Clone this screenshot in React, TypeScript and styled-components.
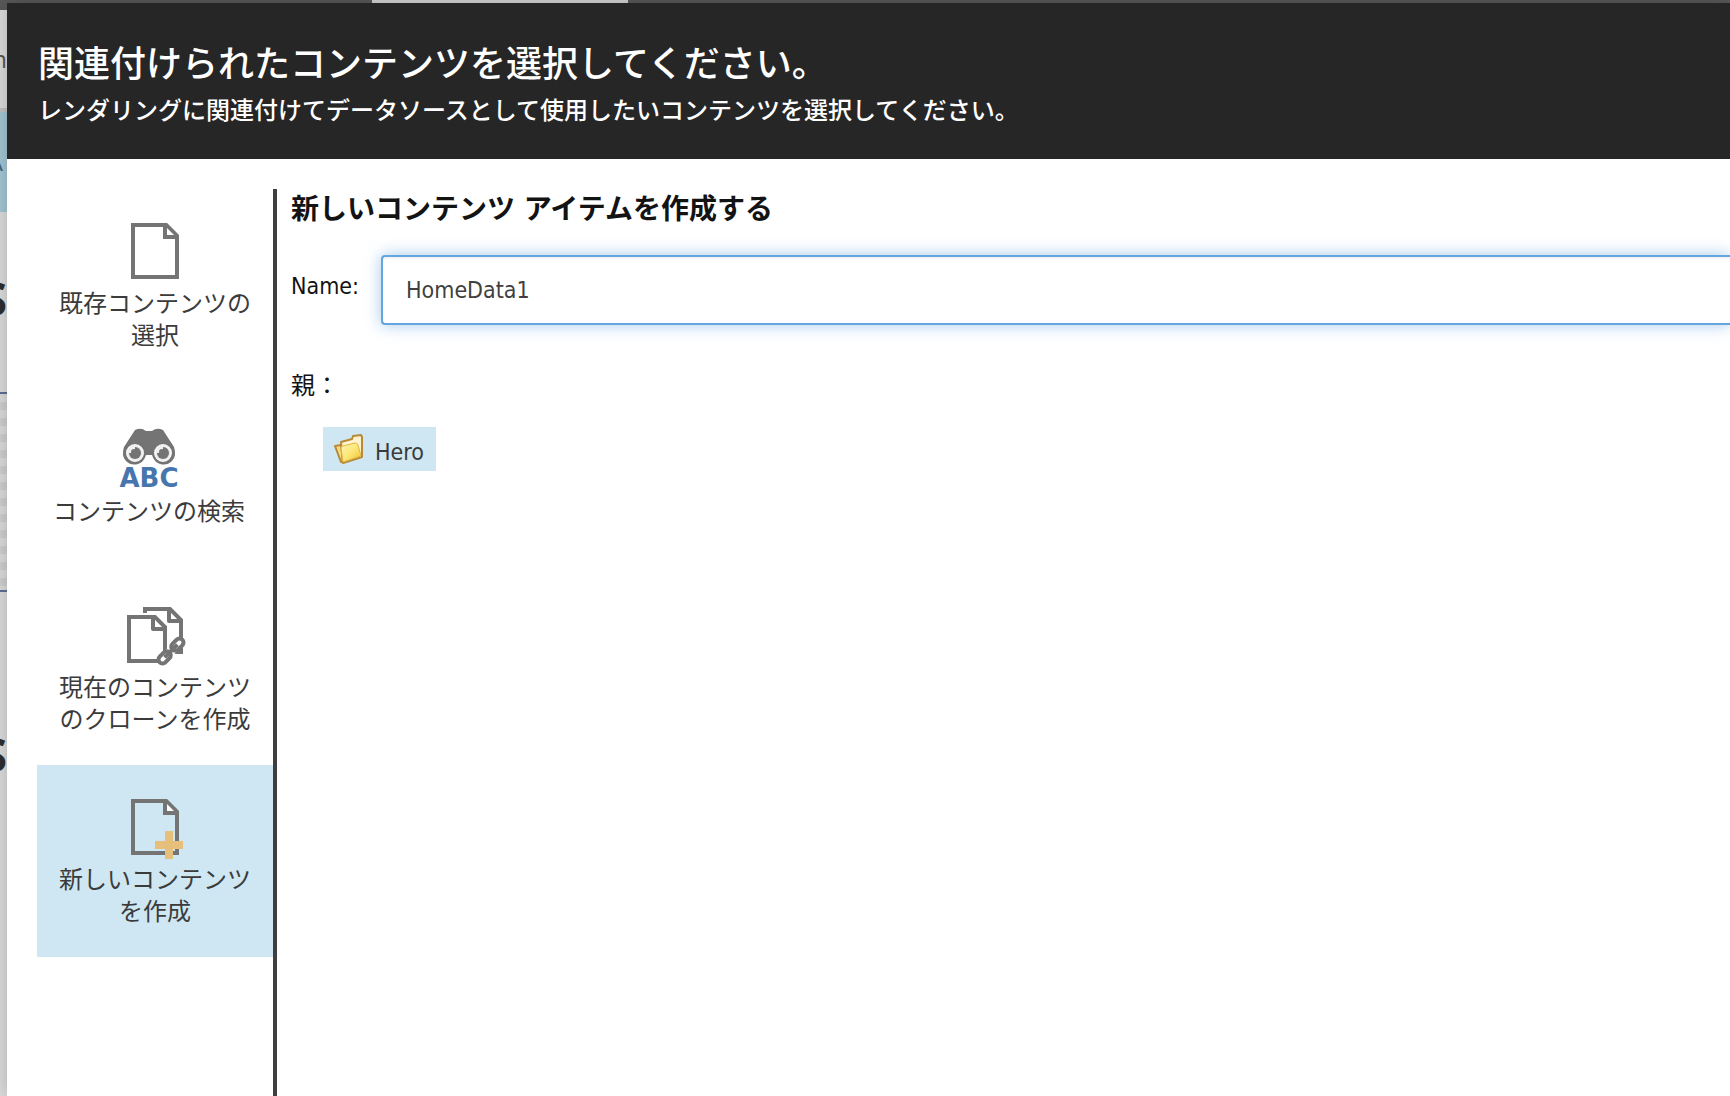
import React, { useState } from 'react';
import styled, { createGlobalStyle } from 'styled-components';

const GlobalStyle = createGlobalStyle`
  *, *::before, *::after { box-sizing: border-box; }
  html, body, #root { height: 100%; }
  body {
    margin: 0;
    overflow: hidden;
    font-family: "DejaVu Sans Condensed", "Noto Sans CJK JP", sans-serif;
    color: #131313;
  }
`;

const Page = styled.div`
  display: grid;
  grid-template: 3px minmax(0, 1fr) / 7px minmax(0, 1fr);
  min-height: 100vh;
  background: #dadada;
`;

const TabStrip = styled.div`
  grid-column: 1 / -1;
  display: flex;
  padding-left: 372px;
  background: #585858;
`;

const ActiveTab = styled.div`
  width: 256px;
  background: #d2d2d2;
`;

const PageEdge = styled.div`
  display: flex;
  flex-direction: column;
  overflow: hidden;
`;

const EdgeBlock = styled.div<{ $h: number; $bg?: string }>`
  flex: none;
  display: flex;
  align-items: center;
  justify-content: flex-end;
  height: ${(p) => p.$h}px;
  background: ${(p) => p.$bg ?? 'transparent'};
`;

const Checker = styled(EdgeBlock)`
  border: solid #5c6d95;
  border-width: 2px 0;
  background: repeating-linear-gradient(#dadada 0 8px, #cecece 8px 16px);
`;

const EdgeText = styled.span<{ $size: number; $bold?: boolean; $pad?: number; $color?: string }>`
  font-family: "Open Sans", sans-serif;
  font-size: ${(p) => p.$size}px;
  font-weight: ${(p) => (p.$bold ? 700 : 400)};
  line-height: 1;
  padding-right: ${(p) => p.$pad ?? 0}px;
  color: ${(p) => p.$color ?? '#2e2e2e'};
`;

const Dialog = styled.main`
  position: relative;
  display: flex;
  flex-direction: column;
  background: #fff;
  box-shadow: 0 0 16px rgba(0, 0, 0, 0.2);
`;

const Header = styled.header`
  padding: 38px 31px 32px;
  background: #262626;
  color: #fff;
`;

const Title = styled.h1`
  margin: 0 0 6px;
  font-size: 36px;
  font-weight: 500;
  line-height: 48px;
`;

const Subtitle = styled.p`
  margin: 0;
  font-size: 24px;
  font-weight: 500;
  line-height: 32px;
`;

const Body = styled.div`
  flex: 1;
  display: flex;
  padding: 30px 0 0 30px;
`;

const Sidebar = styled.nav`
  flex: none;
  width: 240px;
  border-right: 4px solid #3f3f3f;
`;

const NavItem = styled.button<{ $active: boolean; $shift?: boolean }>`
  display: flex;
  flex-direction: column;
  align-items: center;
  justify-content: center;
  gap: 5px;
  width: 100%;
  height: 192px;
  padding: 1px ${(p) => (p.$shift ? 28 : 16)}px 0 16px;
  border: 0;
  background: ${(p) => (p.$active ? '#cee7f2' : 'transparent')};
  color: #3b3b3b;
  font: inherit;
  font-size: 24px;
  line-height: 32px;
  cursor: pointer;

  svg { width: 64px; height: 64px; flex: none; }
`;

const NavLabel = styled.span`
  white-space: pre-line;
`;

const Panel = styled.section`
  flex: 1;
  min-width: 0;
  padding-left: 14px;
`;

const PanelTitle = styled.h2`
  margin: 0;
  padding: 1px 0 25px;
  font-size: 28px;
  font-weight: 700;
  line-height: 40px;
`;

const Field = styled.div`
  display: flex;
`;

const FieldLabel = styled.label`
  width: 90px;
  padding-top: 15px;
  font-size: 23px;
  line-height: 32px;
`;

const NameInput = styled.input`
  flex: 1;
  min-width: 0;
  height: 70px;
  padding: 0 23px;
  border: 2px solid #66a6e0;
  border-right: 0;
  border-radius: 4px 0 0 4px;
  outline: 0;
  box-shadow: 0 0 16px rgba(102, 166, 224, 0.6), inset 0 2px 2px rgba(0, 0, 0, 0.05);
  background: #fff;
  color: #3f3f3f;
  font-family: inherit;
  font-size: 23px;
`;

const ParentLabel = styled.p`
  margin: 45px 0 25px;
  font-size: 24px;
  line-height: 32px;
`;

const TreeNode = styled.button`
  display: flex;
  align-items: center;
  gap: 11px;
  height: 44px;
  margin-left: 32px;
  padding: 0 12px 0 11px;
  border: 0;
  background: #cee7f2;
  color: #3b3b3b;
  font: inherit;
  font-size: 23px;
  line-height: 32px;
  cursor: pointer;

  svg { width: 30px; height: 30px; flex: none; }
  span { padding-top: 6px; }
`;

const GREY = '#747474';

const PageOutline = () => (
  <g fill="none" stroke={GREY} strokeWidth="4">
    <path d="M10 6H43L54 17V58H10Z" />
    <path d="M34 6H43L54 17V24" strokeLinejoin="round" />
    <path d="M42 6V18H54" />
    <path d="M44 9L51 16H44Z" fill="#fff" stroke="none" />
  </g>
);

const PageIcon = () => (
  <svg viewBox="0 0 64 64" aria-hidden="true">
    <PageOutline />
  </svg>
);

const NewPageIcon = () => (
  <svg viewBox="0 0 64 64" aria-hidden="true">
    <PageOutline />
    <path d="M42 36H50V46H60V54H50V64H42V54H32V46H42Z" fill="#e6bf7b" />
  </svg>
);

const SearchIcon = () => (
  <svg viewBox="0 0 64 64" aria-hidden="true">
    <path
      d="M18 3Q24 0 29 4H35Q40 0 46 3L57 20Q60 29 55 34Q50 39 43 37Q37 35 35 28H29Q27 35 21 37Q14 39 9 34Q4 29 7 20Z"
      fill={GREY}
    />
    {[18, 46].map((cx) => (
      <g key={cx}>
        <circle cx={cx} cy="26" r="8" fill="#e8e8e8" stroke="#f4f4f4" strokeWidth="2" />
        <circle cx={cx} cy="26" r="6" fill={GREY} />
        <path d={`M${cx} 26H${cx - 7}A7 7 0 0 1 ${cx} 19Z`} fill="#f0f0f0" />
        <circle cx={cx - 1} cy="25" r="3" fill={GREY} />
      </g>
    ))}
    <text x="32" y="60" textAnchor="middle" fontFamily="DejaVu Sans" fontWeight="700" fontSize="26" fill="#4676ad">
      ABC
    </text>
  </svg>
);

const CloneIcon = () => (
  <svg viewBox="0 0 64 64" aria-hidden="true">
    <g fill="none" stroke={GREY} strokeWidth="4" strokeLinejoin="round">
      <path d="M22 10V6H47L58 17V49H52" strokeLinejoin="miter" />
      <path d="M46 6V18H58" />
      <path d="M6 14H32L42 24V58H6Z" fill="#fff" strokeLinejoin="miter" />
      <path d="M30 14V26H42" />
    </g>
    <g transform="translate(48 48) rotate(-45)" fill="none">
      <path d="M-5 0H5" stroke="#fff" strokeWidth="9" />
      <g stroke={GREY} strokeWidth="4">
        <rect x="-16" y="-4" width="14" height="8" rx="4" fill="#fff" />
        <rect x="2" y="-4" width="14" height="8" rx="4" fill="#fff" />
        <path d="M-9 0H9" />
      </g>
    </g>
  </svg>
);

const FolderIcon = () => (
  <svg viewBox="0 0 30 30" aria-hidden="true">
    <defs>
      <linearGradient id="folder-front" x1="0" y1="0" x2="1" y2="1">
        <stop offset="0" stopColor="#fff6b0" />
        <stop offset="0.5" stopColor="#fde777" />
        <stop offset="1" stopColor="#efc02f" />
      </linearGradient>
    </defs>
    <path d="M1 12L7 11L9 28L7 28Z" fill="#f7dc86" stroke="#b98a35" strokeWidth="2" strokeLinejoin="round" />
    <path d="M7 8L18 5L19 2L27 1L28 3V23L9 29Z" fill="#fff3cc" stroke="#b98a35" strokeWidth="2" strokeLinejoin="round" />
    <path d="M7 14Q7 12 9 12L21 9Q23 9 24 11L27 22L9 28Z" fill="url(#folder-front)" stroke="#dfb747" strokeWidth="1" strokeLinejoin="round" />
  </svg>
);

const items = [
  { id: 'select', label: '既存コンテンツの\n選択', Icon: PageIcon },
  { id: 'search', label: 'コンテンツの検索', Icon: SearchIcon, shift: true },
  { id: 'clone', label: '現在のコンテンツ\nのクローンを作成', Icon: CloneIcon },
  { id: 'create', label: '新しいコンテンツ\nを作成', Icon: NewPageIcon },
];

export default function App() {
  const [active, setActive] = useState('create');
  const [name, setName] = useState('HomeData1');

  return (
    <Page lang="ja">
      <GlobalStyle />
      <TabStrip>
        <ActiveTab />
      </TabStrip>
      <PageEdge aria-hidden="true">
        <EdgeBlock $h={7} $bg="#585858" />
        <EdgeBlock $h={98}>
          <EdgeText $size={24} $color="#555">n</EdgeText>
        </EdgeBlock>
        <EdgeBlock $h={4} $bg="#c0c0c0" />
        <EdgeBlock $h={100} $bg="#a3c4d2">
          <EdgeText $size={24} $pad={4} $color="#466478">A</EdgeText>
        </EdgeBlock>
        <EdgeBlock $h={172}>
          <EdgeText $size={46} $bold>S</EdgeText>
        </EdgeBlock>
        <EdgeBlock $h={8} />
        <Checker $h={200} />
        <EdgeBlock $h={324}>
          <EdgeText $size={46} $bold>S</EdgeText>
        </EdgeBlock>
      </PageEdge>
      <Dialog>
        <Header>
          <Title>関連付けられたコンテンツを選択してください。</Title>
          <Subtitle>レンダリングに関連付けてデータソースとして使用したいコンテンツを選択してください。</Subtitle>
        </Header>
        <Body>
          <Sidebar>
            {items.map(({ id, label, Icon, shift }) => (
              <NavItem key={id} type="button" $active={active === id} $shift={shift} onClick={() => setActive(id)}>
                <Icon />
                <NavLabel>{label}</NavLabel>
              </NavItem>
            ))}
          </Sidebar>
          <Panel>
            <PanelTitle>新しいコンテンツ アイテムを作成する</PanelTitle>
            <Field>
              <FieldLabel htmlFor="item-name">Name:</FieldLabel>
              <NameInput id="item-name" type="text" value={name} onChange={(e) => setName(e.target.value)} />
            </Field>
            <ParentLabel>親：</ParentLabel>
            <TreeNode type="button">
              <FolderIcon />
              <span>Hero</span>
            </TreeNode>
          </Panel>
        </Body>
      </Dialog>
    </Page>
  );
}
